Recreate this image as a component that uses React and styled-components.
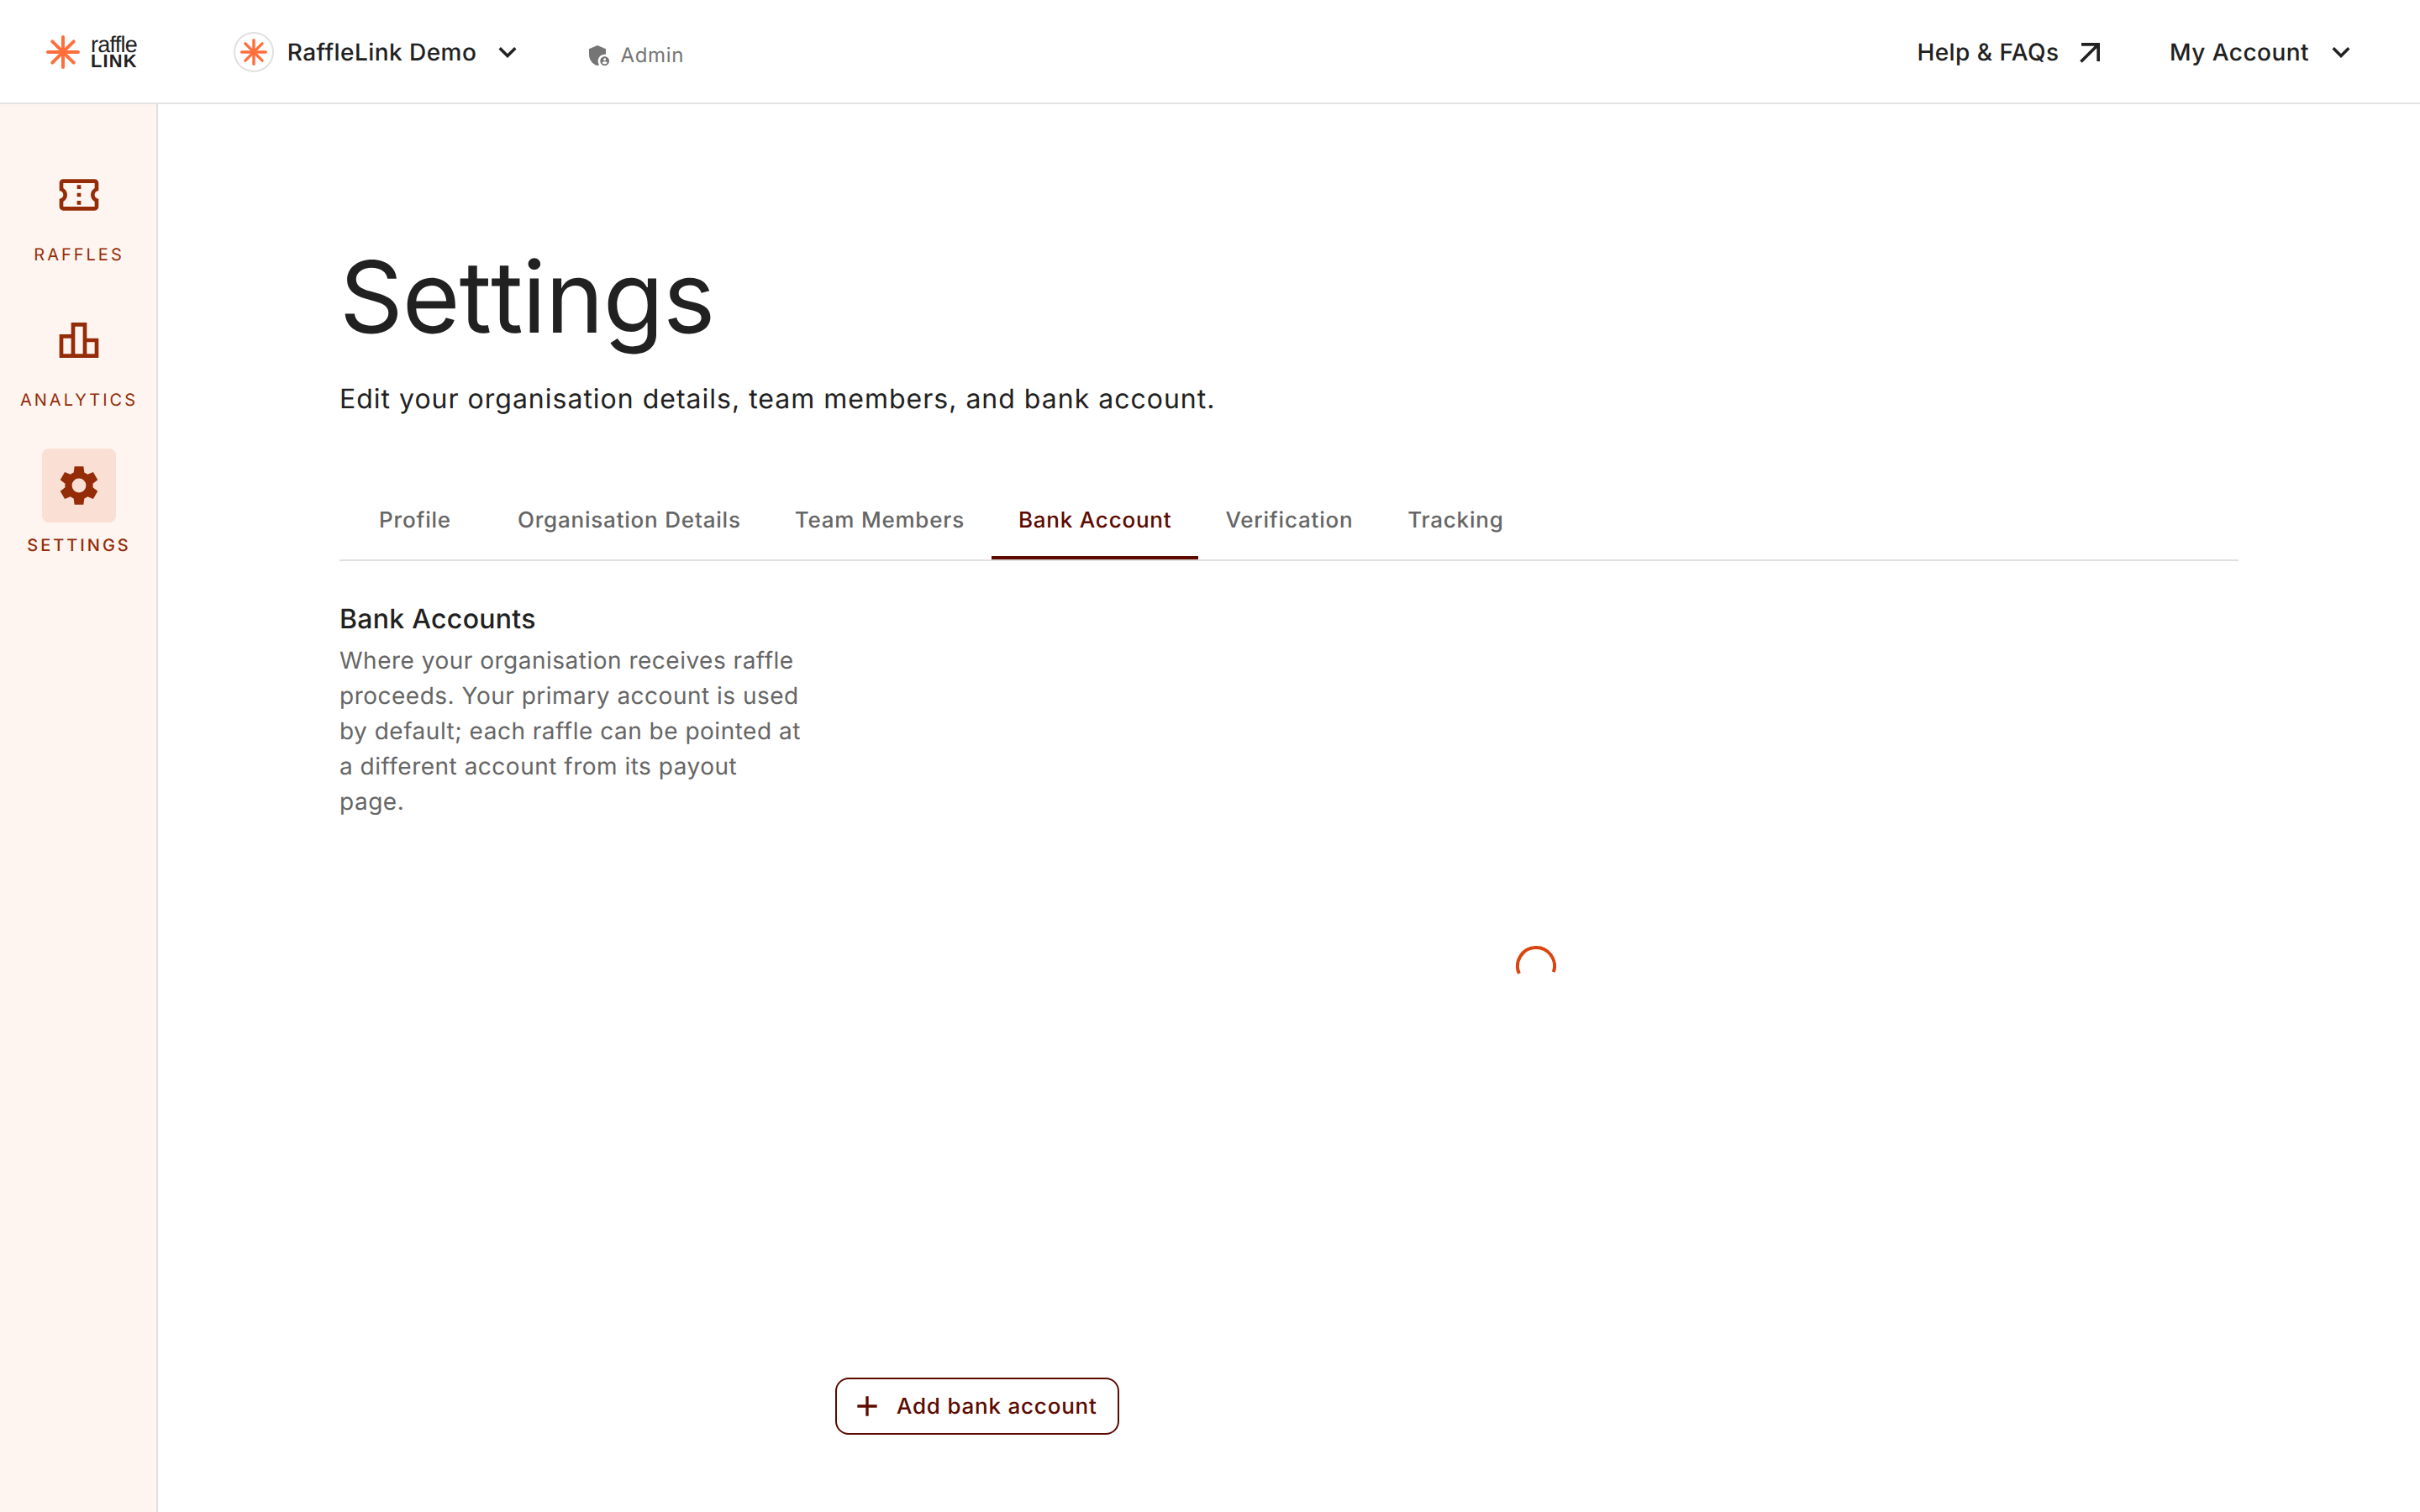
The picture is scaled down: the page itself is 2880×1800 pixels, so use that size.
import styled, { createGlobalStyle, keyframes } from "styled-components";
import {
  MdAdd,
  MdAdminPanelSettings,
  MdArrowOutward,
  MdKeyboardArrowDown,
  MdOutlineConfirmationNumber,
  MdOutlineLeaderboard,
} from "react-icons/md";

const GlobalStyle = createGlobalStyle`
  * {
    box-sizing: border-box;
  }

  body {
    margin: 0;
    background-color: #ffffff;
    color: #212121;
    font-family: Inter, "Liberation Sans", sans-serif;
    font-size: 28px;
    text-rendering: geometricPrecision;
  }

  h1, h2, p {
    margin: 0;
    font-weight: 400;
  }

  button {
    border: none;
    background: none;
    font-family: inherit;
    color: inherit;
    text-rendering: inherit;
    cursor: pointer;
  }

  svg {
    display: block;
    flex-shrink: 0;
  }
`;

const Page = styled.div`
  display: flex;
  flex-direction: column;
  height: 1800px;
`;

const Header = styled.header`
  display: flex;
  align-items: center;
  height: 124px;
  padding: 2px 73px 0 55px;
  border-bottom: 2px solid #e4e4e4;
`;

const HeaderButton = styled.button`
  display: flex;
  align-items: center;
  gap: ${({ $gap }) => $gap}px;
  margin-left: ${({ $offset }) => $offset}px;
  padding: 0;
  font-size: 28px;
  font-weight: 500;
  line-height: 42px;
  letter-spacing: 0.45px;
  white-space: nowrap;
`;

const Avatar = styled.span`
  display: flex;
  align-items: center;
  justify-content: center;
  width: 48px;
  height: 48px;
  border: 2px solid #e0e0e0;
  border-radius: 50%;
`;

const Role = styled.div`
  display: flex;
  align-items: center;
  gap: 9px;
  margin-left: 72.5px;
  padding-top: 7px;
  color: #757575;
  font-size: 24px;
  line-height: 36px;
  letter-spacing: 0.7px;
`;

const HeaderRight = styled.div`
  display: flex;
  margin-left: auto;
`;

const Body = styled.div`
  display: flex;
  flex: 1;
`;

const Sidebar = styled.nav`
  display: flex;
  flex-direction: column;
  gap: 41px;
  width: 188px;
  padding: 64px 0 0 2px;
  border-right: 2px solid #e0e0e0;
  background-color: #fff5f0;
`;

const NavItem = styled.a`
  display: flex;
  flex-direction: column;
  align-items: center;
  gap: 11px;
  color: #942c08;
  font-size: 20px;
  font-weight: ${({ $active }) => ($active ? 500 : 400)};
  line-height: 33.2px;
  letter-spacing: 3px;
  text-transform: uppercase;
`;

const NavIcon = styled.span`
  display: flex;
  align-items: center;
  justify-content: center;
  width: 88px;
  height: 88px;
  border-radius: 8px;
  background-color: ${({ $active }) => ($active ? "#fadfd5" : "transparent")};
`;

const Main = styled.main`
  display: flex;
  flex: 1;
  flex-direction: column;
  padding: 159px 216px 92px;
`;

const Title = styled.h1`
  font-size: 118px;
  font-kerning: none;
  line-height: 142px;
  letter-spacing: -1.05px;
`;

const Subtitle = styled.p`
  margin-top: 26px;
  font-size: 32px;
  line-height: 48px;
  letter-spacing: 1px;
`;

const Tabs = styled.div`
  display: flex;
  margin-top: 71px;
  border-bottom: 2px solid #e0e0e0;
`;

const Tab = styled.button`
  min-width: 180px;
  height: 96px;
  padding: 7px 32px 0;
  border-bottom: 4px solid ${({ $active }) => ($active ? "#5c0a00" : "transparent")};
  color: ${({ $active }) => ($active ? "#5c0a00" : "#666666")};
  font-size: 26px;
  font-weight: 500;
  line-height: 32px;
  letter-spacing: 0.79px;
  white-space: nowrap;
`;

const Section = styled.section`
  display: grid;
  grid-template-columns: 550px 1fr;
  column-gap: 40px;
  flex: 1;
  padding-top: 45px;
`;

const SectionTitle = styled.h2`
  font-size: 32px;
  font-weight: 500;
  line-height: 48px;
  letter-spacing: 0.3px;
`;

const SectionText = styled.p`
  margin-top: 4px;
  color: #666666;
  line-height: 42px;
  letter-spacing: 0.5px;
`;

const Accounts = styled.div`
  display: flex;
  flex-direction: column;
  align-items: flex-start;
`;

const Loading = styled.div`
  display: flex;
  flex: 1;
  align-items: center;
  justify-content: center;
  width: 100%;
  padding: 0 2px 53px 0;
`;

const AddButton = styled.button`
  display: flex;
  align-items: center;
  gap: 15px;
  width: 338px;
  height: 68px;
  padding: 0 0 0 16px;
  border: 2px solid #5c0a00;
  border-radius: 16px;
  color: #5c0a00;
  font-size: 26px;
  font-weight: 500;
  line-height: 32px;
  letter-spacing: 0.78px;
  white-space: nowrap;
`;

const AddLabel = styled.span`
  padding-top: 2px;
`;

function Spark({ size, strokeWidth }) {
  const half = size / 2;
  const end = half - strokeWidth / 2;
  const diagonal = end * 0.705;

  return (
    <svg
      width={size}
      height={size}
      viewBox={`${-half} ${-half} ${size} ${size}`}
      stroke="#ff6f3c"
      strokeWidth={strokeWidth}
      strokeLinecap="round"
    >
      <line x1={-end} y1="0" x2={end} y2="0" />
      <line x1="0" y1={-end} x2="0" y2={end} />
      <line x1={-diagonal} y1={-diagonal} x2={diagonal} y2={diagonal} />
      <line x1={-diagonal} y1={diagonal} x2={diagonal} y2={-diagonal} />
    </svg>
  );
}

const LogoLink = styled.a`
  display: flex;
  align-items: center;
  gap: 13px;
  width: 111px;
`;

const Wordmark = styled.svg`
  overflow: visible;
`;

function Logo() {
  return (
    <LogoLink>
      <Spark size={40} strokeWidth={4} />
      <Wordmark
        width="58"
        height="44"
        viewBox="0 0 58 44"
        fill="#212121"
        fontFamily="'Liberation Sans', Arial, sans-serif"
      >
        <text x="0" y="22" fontSize="27" textLength="55.8" lengthAdjust="spacing">
          raffle
        </text>
        <text x="0" y="40" fontSize="21.8" fontWeight="700" textLength="54.6" lengthAdjust="spacing">
          LINK
        </text>
      </Wordmark>
    </LogoLink>
  );
}

function Gear() {
  return (
    <svg width="56" height="56" viewBox="-12 -12 24 24" fill="currentColor">
      <path
        fillRule="evenodd"
        d="M-2.3-9.7H2.3L2.72-6.6Q3.6-6.25 4.36-5.66L7.25-6.84L9.55-2.86L7.08-.94Q7.2 0 7.08.94L9.55 2.86L7.25 6.84L4.36 5.66Q3.6 6.25 2.72 6.6L2.3 9.7H-2.3L-2.72 6.6Q-3.6 6.25-4.36 5.66L-7.25 6.84L-9.55 2.86L-7.08.94Q-7.2 0-7.08-.94L-9.55-2.86L-7.25-6.84L-4.36-5.66Q-3.6-6.25-2.72-6.6ZM0-3.6A3.6 3.6 0 1 0 0 3.6A3.6 3.6 0 1 0 0-3.6Z"
      />
    </svg>
  );
}

const spin = keyframes`
  from {
    transform: rotate(0deg);
  }
  to {
    transform: rotate(360deg);
  }
`;

const SpinnerSvg = styled.svg`
  animation: ${spin} 1.4s linear infinite;
  animation-play-state: paused;
`;

function Spinner() {
  return (
    <SpinnerSvg width="48" height="48" viewBox="0 0 48 48" fill="none">
      <path
        d="M3.9 33A22 22 0 1 1 44.8 31.2"
        stroke="#d9450f"
        strokeWidth="4"
      />
    </SpinnerSvg>
  );
}

const navItems = [
  { label: "Raffles", icon: <MdOutlineConfirmationNumber size={56} /> },
  { label: "Analytics", icon: <MdOutlineLeaderboard size={56} /> },
  { label: "Settings", icon: <Gear />, active: true },
];

const tabs = [
  "Profile",
  "Organisation Details",
  "Team Members",
  "Bank Account",
  "Verification",
  "Tracking",
];

export default function App() {
  const activeTab = "Bank Account";

  return (
    <>
      <GlobalStyle />
      <Page>
        <Header>
          <Logo />
          <HeaderButton $gap={15.7} $offset={112}>
            <Avatar>
              <Spark size={32} strokeWidth={3.4} />
            </Avatar>
            RaffleLink Demo
            <MdKeyboardArrowDown size={42} />
          </HeaderButton>
          <Role>
            <MdAdminPanelSettings size={32} />
            Admin
          </Role>
          <HeaderRight>
            <HeaderButton $gap={15.5} $offset={0}>
              Help &amp; FAQs
              <MdArrowOutward size={44} />
            </HeaderButton>
            <HeaderButton $gap={17} $offset={72}>
              My Account
              <MdKeyboardArrowDown size={42} />
            </HeaderButton>
          </HeaderRight>
        </Header>
        <Body>
          <Sidebar>
            {navItems.map(({ label, icon, active }) => (
              <NavItem key={label} $active={active}>
                <NavIcon $active={active}>{icon}</NavIcon>
                {label}
              </NavItem>
            ))}
          </Sidebar>
          <Main>
            <Title>Settings</Title>
            <Subtitle>
              Edit your organisation details, team members, and bank account.
            </Subtitle>
            <Tabs>
              {tabs.map((tab) => (
                <Tab key={tab} $active={tab === activeTab}>
                  {tab}
                </Tab>
              ))}
            </Tabs>
            <Section>
              <div>
                <SectionTitle>Bank Accounts</SectionTitle>
                <SectionText>
                  Where your organisation receives raffle proceeds. Your primary
                  account is used by default; each raffle can be pointed at a
                  different account from its payout page.
                </SectionText>
              </div>
              <Accounts>
                <Loading>
                  <Spinner />
                </Loading>
                <AddButton>
                  <MdAdd size={40} />
                  <AddLabel>Add bank account</AddLabel>
                </AddButton>
              </Accounts>
            </Section>
          </Main>
        </Body>
      </Page>
    </>
  );
}
